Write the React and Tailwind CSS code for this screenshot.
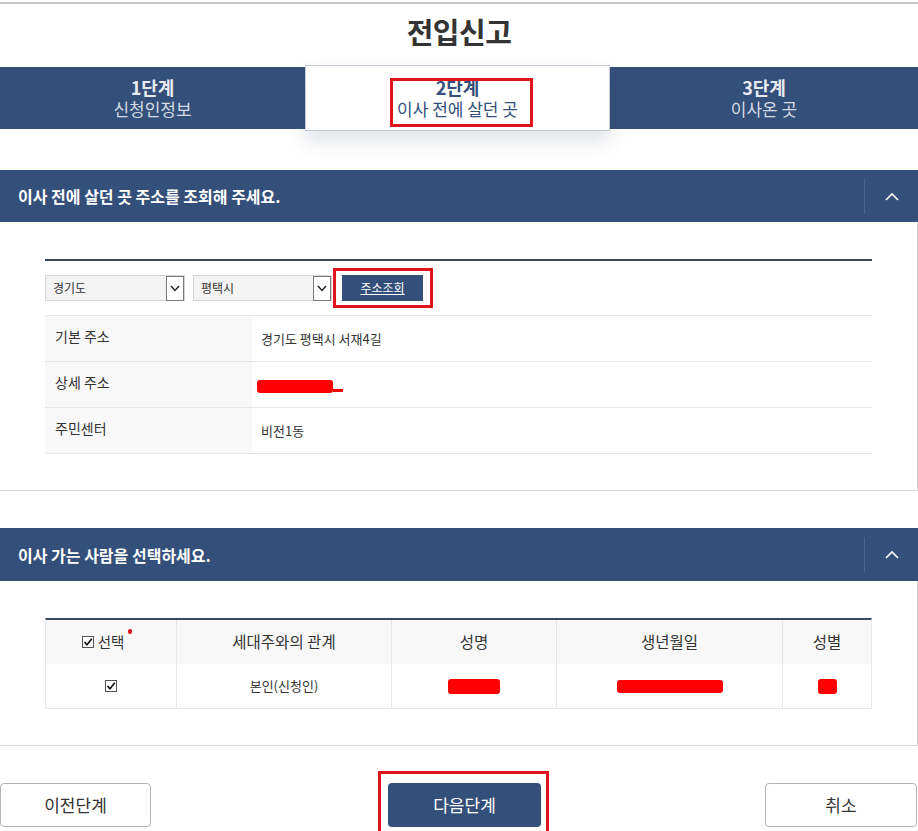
import React from "react";

const BLUE = "bg-[#344f7a]";

function Chevron() {
  return (
    <svg width="14" height="9" viewBox="0 0 14 9" fill="none">
      <polyline points="1,8 7,2 13,8" stroke="white" strokeWidth="1.6" />
    </svg>
  );
}

function Check({ size = 12 }) {
  return (
    <svg width={size} height={size} viewBox="0 0 12 12">
      <rect x="0.5" y="0.5" width="11" height="11" fill="white" stroke="#555" />
      <polyline points="2.5,6 5,8.8 9.8,2.8" fill="none" stroke="#111" strokeWidth="1.7" />
    </svg>
  );
}

function Select({ label, w }) {
  return (
    <div className={`flex items-center h-[26px] ${w} bg-[#f4f4f4] border border-[#d4d4d4]`}>
      <span className="pl-[7px] text-[12px] text-[#333] flex-1">{label}</span>
      <span className="w-[18px] h-[25px] border border-[#7a7a7a] bg-white flex items-center justify-center">
        <svg width="10" height="7" viewBox="0 0 10 7">
          <polyline points="1,1 5,5.5 9,1" fill="none" stroke="#222" strokeWidth="1.4" />
        </svg>
      </span>
    </div>
  );
}

function SectionHeader({ title, h }) {
  return (
    <div className={`flex items-center ${h} ${BLUE}`}>
      <div className="flex-1 pl-[18px] text-[16px] font-bold text-white">{title}</div>
      <div className="w-px h-[35px] bg-[#4d648c]" />
      <div className="w-[53px] flex items-center justify-center">
        <Chevron />
      </div>
    </div>
  );
}

function Redact({ w, h = 13 }) {
  return <span className={`inline-block ${w} ${h === 13 ? "h-[13px]" : "h-[15px]"} bg-[#ff0000] rounded-[3px]`} />;
}

export default function App() {
  return (
    <div className="w-[918px] h-[831px] overflow-hidden bg-white text-[#333] font-['Noto_Sans_CJK_KR','Noto_Sans',sans-serif]">
      <div className="h-[2px] mt-[2px] bg-[#c6c6c6]" />
      <h1 className="h-[61px] pb-[5px] flex items-center justify-center text-[29px] font-bold text-[#333] tracking-[-0.5px]">
        전입신고
      </h1>

      {/* Steps */}
      <div className="flex h-[66px]">
        <div className={`w-[305px] my-[2px] ${BLUE} flex flex-col items-center justify-center`}>
          <div className="text-[18px] font-bold leading-[21px] text-[#e8ebf1]">1단계</div>
          <div className="text-[17px] leading-[22px] text-[#d5dbe5]">신청인정보</div>
        </div>
        <div className="relative z-10 w-[305px] bg-white border border-[#c5cad6] shadow-[0_10px_18px_rgba(60,75,110,0.16)] flex flex-col items-center justify-center">
          <div className="text-[18px] font-bold leading-[21px] text-[#344f7a]">2단계</div>
          <div className="text-[17px] leading-[22px] text-[#344f7a]">이사 전에 살던 곳</div>
          <div className="absolute left-[84px] top-[12px] w-[143px] h-[49px] border-[3px] border-[#e0141a]" />
        </div>
        <div className={`flex-1 my-[2px] ${BLUE} flex flex-col items-center justify-center`}>
          <div className="text-[18px] font-bold leading-[21px] text-[#e8ebf1]">3단계</div>
          <div className="text-[17px] leading-[22px] text-[#d5dbe5]">이사온 곳</div>
        </div>
      </div>

      {/* Section 1 */}
      <div className="mt-[39px]">
        <SectionHeader title="이사 전에 살던 곳 주소를 조회해 주세요." h="h-[52px]" />
        <div className="border-r border-b border-[#d6d6d6] pt-[37px] pl-[45px] pr-[45px] pb-[36px]">
          <div className="h-[2px] bg-[#3b4a5e]" />
          <div className="mt-[14px] flex items-center h-[26px]">
            <Select label="경기도" w="w-[140px]" />
            <div className="w-[8px]" />
            <Select label="평택시" w="w-[139px]" />
            <div className="w-[10px]" />
            <div className="relative">
              <div className={`w-[81px] h-[26px] ${BLUE} text-white text-[12px] underline flex items-center justify-center`}>
                주소조회
              </div>
              <div className="absolute -left-[9px] -right-[10px] -top-[7px] -bottom-[7px] border-[3px] border-[#e0141a]" />
            </div>
          </div>
          <div className="mt-[14px] border-t border-[#e6e6e6]">
            {[
              ["기본 주소", <span className="text-[13px]">경기도 평택시 서재4길</span>],
              ["상세 주소", <span className="flex items-center -ml-[4px] mt-[4px]"><Redact w="w-[76px]" /><span className="inline-block w-[10px] h-[3px] bg-[#ff0000] self-end mb-[1px]" /></span>],
              ["주민센터", <span className="text-[13px]">비전1동</span>],
            ].map(([k, v], i) => (
              <div key={i} className="flex h-[46px] border-b border-[#e6e6e6]">
                <div className="w-[207px] bg-[#f8f8f8] pl-[10px] flex items-center text-[14px] text-[#333] pb-[4px]">{k}</div>
                <div className="flex-1 pl-[9px] flex items-center">{v}</div>
              </div>
            ))}
          </div>
        </div>
      </div>

      {/* Section 2 */}
      <div className="mt-[37px]">
        <SectionHeader title="이사 가는 사람을 선택하세요." h="h-[53px]" />
        <div className="border-r border-b border-[#d6d6d6] pt-[37px] pl-[45px] pr-[45px] pb-[36px]">
          <div className="border-t-2 border-[#3b4a5e] border-l border-r border-l-[#e6e6e6] border-r-[#e6e6e6]">
            <div className="flex h-[44px] bg-[#f8f8f8] text-[15.5px] text-[#333]">
              <div className="w-[131px] flex items-center justify-center border-r border-[#e6e6e6]">
                <span className="flex items-center gap-[4px] mr-[16px]">
                  <Check size={12} />
                  <span className="relative text-[14.5px]">
                    선택
                    <span className="absolute -right-[8px] -top-[2px] w-[4px] h-[5px] rounded-full bg-[#e0141a]" />
                  </span>
                </span>
              </div>
              <div className="w-[215px] flex items-center justify-center border-r border-[#e6e6e6]">세대주와의 관계</div>
              <div className="w-[165px] flex items-center justify-center border-r border-[#e6e6e6]">성명</div>
              <div className="w-[226px] flex items-center justify-center border-r border-[#e6e6e6]">생년월일</div>
              <div className="flex-1 flex items-center justify-center">성별</div>
            </div>
            <div className="flex h-[45px] border-b border-[#e6e6e6] text-[13px] text-[#333]">
              <div className="w-[131px] flex items-center justify-center border-r border-[#e6e6e6]">
                <Check size={12} />
              </div>
              <div className="w-[215px] flex items-center justify-center border-r border-[#e6e6e6]">본인(신청인)</div>
              <div className="w-[165px] flex items-center justify-center border-r border-[#e6e6e6]">
                <Redact w="w-[52px]" h={15} />
              </div>
              <div className="w-[226px] flex items-center justify-center border-r border-[#e6e6e6]">
                <Redact w="w-[106px]" />
              </div>
              <div className="flex-1 flex items-center justify-center">
                <Redact w="w-[19px]" h={15} />
              </div>
            </div>
          </div>
        </div>
      </div>

      {/* Buttons */}
      <div className="mt-[37px] flex items-start h-[44px] pr-[1px]">
        <button className="w-[151px] h-[44px] border border-[#b4b4b4] rounded-[4px] bg-white text-[17px] text-[#333]">
          이전단계
        </button>
        <div className="relative ml-[237px]">
          <button className={`w-[153px] h-[44px] rounded-[4px] ${BLUE} text-[17px] text-white`}>다음단계</button>
          <div className="absolute -left-[10px] -right-[8px] -top-[12px] -bottom-[14px] border-[3px] border-[#e0141a]" />
        </div>
        <button className="ml-auto w-[152px] h-[44px] border border-[#b4b4b4] rounded-[4px] bg-white text-[17px] text-[#333]">
          취소
        </button>
      </div>
    </div>
  );
}
